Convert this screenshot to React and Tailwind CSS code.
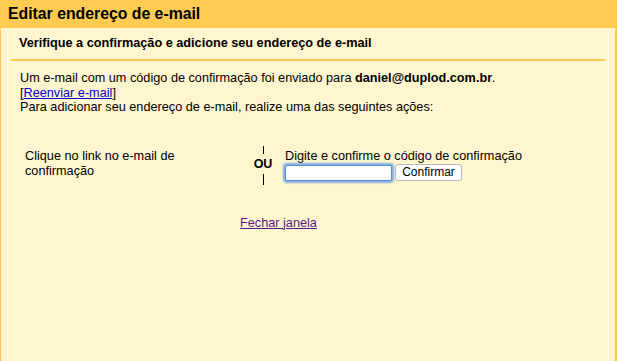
import React from 'react';

export default function App() {
  return (
    <div className="w-[617px] h-[361px] flex flex-col bg-[#fecb52] text-black font-['Liberation_Sans',Arial,sans-serif]">
      {/* Header */}
      <div className="h-[28px] shrink-0 flex items-center px-[8px]">
        <h1 className="text-[15.8px] font-bold leading-none">Editar endereço de e-mail</h1>
      </div>

      {/* Body */}
      <div className="flex-1 bg-[#fff6cf] ml-[1px] mr-[2px] pt-[8px] px-[10px]">
        <div className="border-b-2 border-[#fecb52] pl-[8px] pb-[8px] text-[12.7px] font-bold leading-[15px]">
          Verifique a confirmação e adicione seu endereço de e-mail
        </div>

        <div className="pl-[9px] pt-[10px] text-[12.7px] leading-[14.5px]">
          <div>
            Um e-mail com um código de confirmação foi enviado para <b>daniel@duplod.com.br</b>.
          </div>
          <div>
            [<a href="#" className="text-[#0000cc] underline">Reenviar e-mail</a>]
          </div>
          <div>Para adicionar seu endereço de e-mail, realize uma das seguintes ações:</div>
        </div>

        {/* Options */}
        <div className="flex items-start mt-[33px] text-[12.7px] leading-[15px]">
          <div className="w-[232px] pl-[14px] pt-[1px]">Clique no link no e-mail de confirmação</div>
          <div className="w-[40px] flex flex-col items-center mt-[-2px]">
            <div className="w-[1px] h-[8px] bg-black" />
            <div className="font-bold text-[12.5px] leading-[20px]">OU</div>
            <div className="w-[1px] h-[11px] bg-black" />
          </div>
          <div className="pl-[2px] pt-[1px]">
            <div>Digite e confirme o código de confirmação</div>
            <div className="flex items-start gap-[3px]">
              <input
                type="text"
                className="w-[107px] h-[16px] mt-[1px] bg-white border border-[#4f8ce0] rounded-[2px] shadow-[0_0_2px_2px_rgba(95,150,230,0.75)] outline-none"
              />
              <button className="h-[17px] w-[67px] bg-white border border-[#b8b8b8] rounded-[3px] text-[12px] leading-none text-black">
                Confirmar
              </button>
            </div>
          </div>
        </div>

        <div className="mt-[31px] pl-[229px] text-[12.7px] leading-[15px]">
          <a href="#" className="text-[#551a8b] underline">Fechar janela</a>
        </div>
      </div>
    </div>
  );
}
